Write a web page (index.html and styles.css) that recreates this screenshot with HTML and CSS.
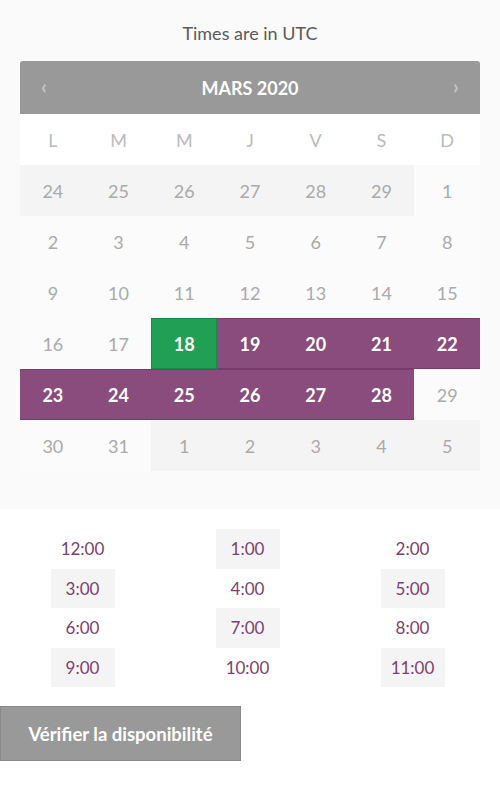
FILE: index.html
```html
<!DOCTYPE html>
<html lang="fr">
<head>
<meta charset="utf-8">
<link rel="stylesheet" href="styles.css">
</head>
<body>
<div class="top">
  <p class="tz">Times are in UTC</p>
  <div class="cal">
    <div class="cal-head">
      <span class="arrow">&#8249;</span>
      <span class="month">MARS 2020</span>
      <span class="arrow">&#8250;</span>
    </div>
    <div class="week">
      <span>L</span><span>M</span><span>M</span><span>J</span><span>V</span><span>S</span><span>D</span>
    </div>
    <div class="days">
      <span class="other">24</span><span class="other">25</span><span class="other">26</span><span class="other">27</span><span class="other">28</span><span class="other">29</span><span>1</span>
      <span>2</span><span>3</span><span>4</span><span>5</span><span>6</span><span>7</span><span>8</span>
      <span>9</span><span>10</span><span>11</span><span>12</span><span>13</span><span>14</span><span>15</span>
      <span>16</span><span>17</span><span class="today">18</span><span class="sel">19</span><span class="sel">20</span><span class="sel">21</span><span class="sel">22</span>
      <span class="sel">23</span><span class="sel">24</span><span class="sel">25</span><span class="sel">26</span><span class="sel">27</span><span class="sel">28</span><span>29</span>
      <span>30</span><span>31</span><span class="other">1</span><span class="other">2</span><span class="other">3</span><span class="other">4</span><span class="other">5</span>
    </div>
  </div>
</div>
<div class="times">
  <span>12:00</span><span class="alt">1:00</span><span>2:00</span>
  <span class="alt">3:00</span><span>4:00</span><span class="alt">5:00</span>
  <span>6:00</span><span class="alt">7:00</span><span>8:00</span>
  <span class="alt">9:00</span><span>10:00</span><span class="alt">11:00</span>
</div>
<button class="check">Vérifier la disponibilité</button>
</body>
</html>
```

FILE: styles.css
```css
* { box-sizing: border-box; }
html, body { margin: 0; padding: 0; background: #fff; }
body { font-family: Lato, "Open Sans", sans-serif; width: 500px; }

.top {
  background: #fafafa;
  padding: 22px 20px 38px;
}
.tz {
  margin: 0 0 17px;
  text-align: center;
  font-size: 18px;
  line-height: 22px;
  color: #5a5a5a;
}
.cal { width: 460px; }
.cal-head {
  height: 53px;
  background: #999;
  border-radius: 3px 3px 0 0;
  display: flex;
  align-items: center;
  justify-content: space-between;
  padding: 0 19px 0 19px;
  color: #fff;
}
.month { font-weight: 700; font-size: 18px; }
.arrow { color: #c4c4c4; font-size: 20px; font-weight: 700; width: 10px; text-align: center; margin-top: -3px; }
.week {
  display: grid;
  grid-template-columns: repeat(7, 1fr);
  background: #fff;
  height: 51px;
  align-items: center;
}
.week span { text-align: center; color: #bbb; font-size: 18px; }
.days {
  display: grid;
  grid-template-columns: repeat(7, 1fr);
  grid-auto-rows: 51px;
}
.days span {
  display: flex;
  align-items: center;
  justify-content: center;
  color: #aaa;
  font-size: 18px;
  background: #fbfbfb;
}
.days span.other { background: #f4f4f4; }
.days span.today {
  background: #21a055;
  color: #fff;
  font-weight: 700;
  border: 1px solid #1a8a47;
}
.days span.sel {
  background: #8a4c7d;
  color: #fff;
  font-weight: 700;
  border-top: 1px solid #7a3a6c;
  border-bottom: 1px solid #7a3a6c;
}

.times {
  display: grid;
  grid-template-columns: repeat(3, 165px);
  grid-auto-rows: 39.5px;
  padding-top: 20px;
  justify-items: center;
}
.times span {
  width: 64px;
  display: flex;
  align-items: center;
  justify-content: center;
  color: #7d3f72;
  font-size: 17px;
}
.times span.alt { background: #f4f4f4; }

.check {
  display: block;
  margin-top: 19px;
  width: 241px;
  height: 55px;
  background: #999;
  border: 1px solid #8a8a8a;
  color: #fff;
  font-family: Lato, "Open Sans", sans-serif;
  font-weight: 700;
  font-size: 18.5px;
  padding: 0;
}
```
